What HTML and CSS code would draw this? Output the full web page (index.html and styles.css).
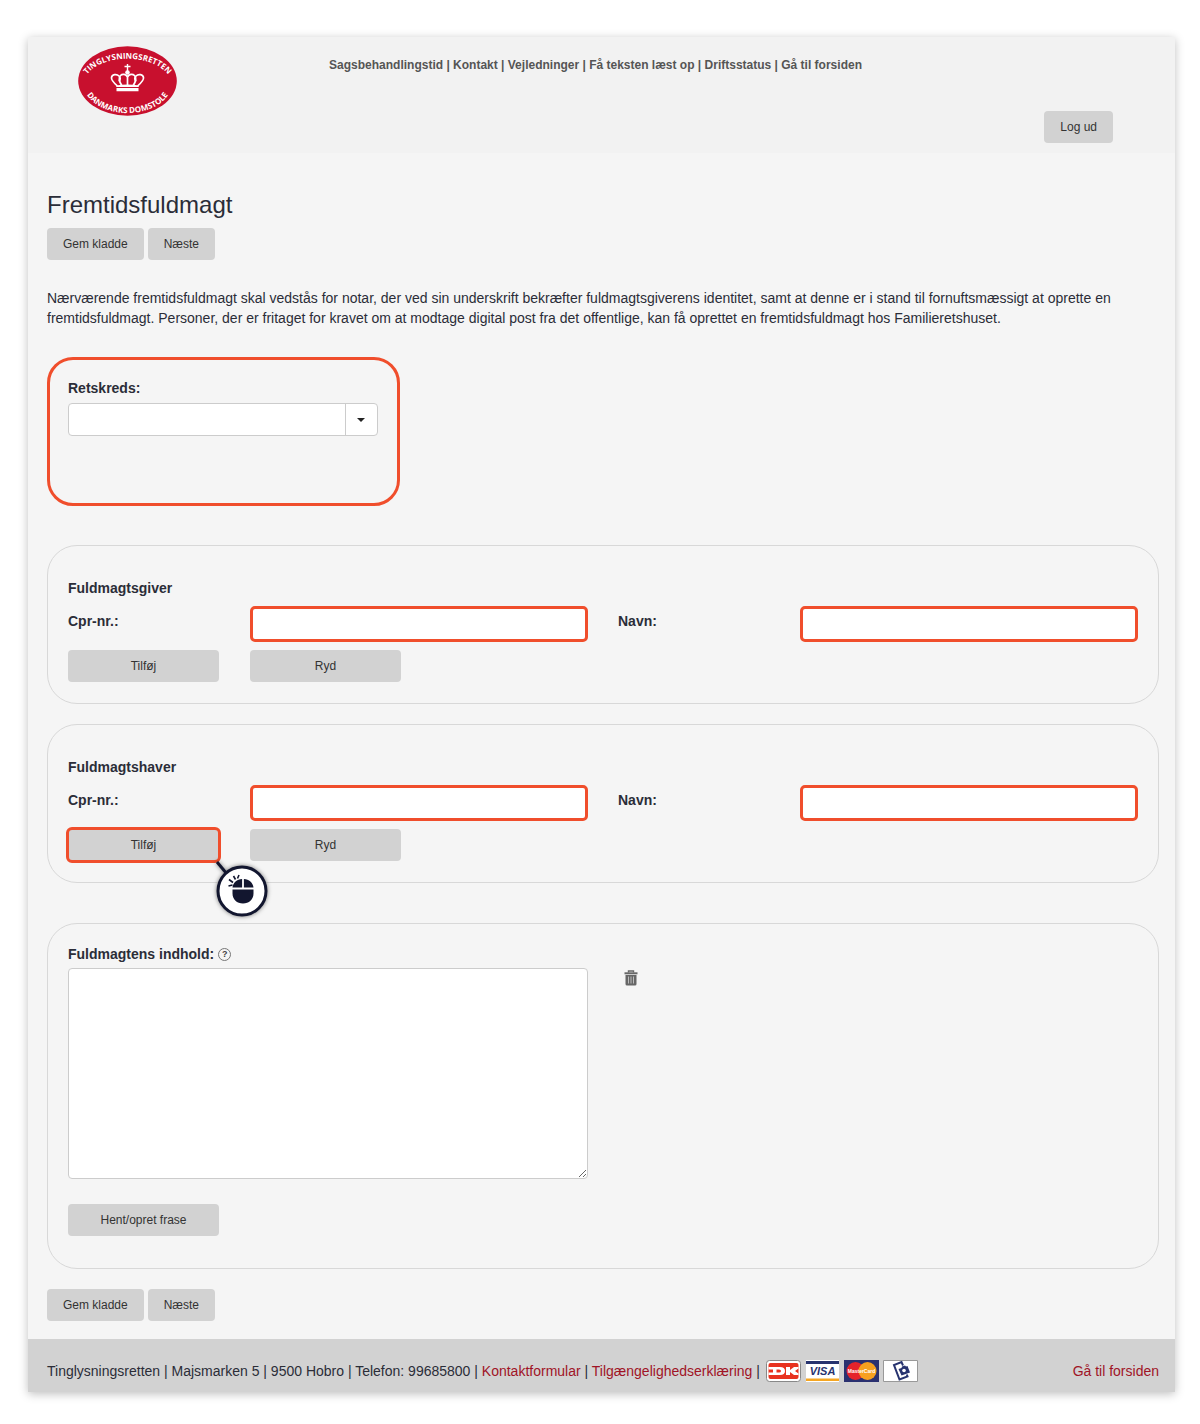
FILE: index.html
```
<!DOCTYPE html>
<html lang="da">
<head>
  <meta charset="UTF-8" />
  <meta name="viewport" content="width=device-width, initial-scale=1.0" />
  <title>Fremtidsfuldmagt</title>
  <link rel="stylesheet" href="styles.css">
</head>
<body>

<div class="page">
  <header class="header">
    <svg class="logo" viewBox="0 0 99 70" role="img" aria-label="Tinglysningsretten, Danmarks Domstole">
      <defs>
        <path id="arc-top" d="M7 32 A44 26 0 0 1 92 32" />
        <path id="arc-bottom" d="M6 42 A44 29.500 0 0 0 93 42" />
      </defs>
      <ellipse cx="49.500" cy="35" rx="49.300" ry="34.700" fill="#c8102e" />
      <text class="logo-text"><textPath href="#arc-top" startOffset="50%" text-anchor="middle">TINGLYSNINGSRETTEN</textPath></text>
      <text class="logo-text"><textPath href="#arc-bottom" startOffset="50%" text-anchor="middle">DANMARKS DOMSTOLE</textPath></text>
      <g fill="none" stroke="#fff" stroke-width="1.700">
        <path d="M49.500 18v7M46.500 20.500h6" stroke-width="1.400" />
        <path d="M39.500 40C36 37 33 34.500 33.500 31.500c.5-3 5-4 7.500-1.500 1.500 1.500 1.500 3.500 0 5.500" />
        <path d="M59.500 40c3.500-3 6.500-5.500 6-8.500-.5-3-5-4-7.500-1.500-1.500 1.500-1.500 3.500 0 5.500" />
        <path d="M44 40c-2.500-4-4-8-1.500-10.500 2-2 5.500-1.500 7 1.500 1.500-3 5-3.500 7-1.500 2.500 2.500 1 6.500-1.500 10.500M49.500 30v10" />
      </g>
      <circle cx="49.500" cy="26.500" r="2.300" fill="#fff" />
      <path d="M38 39.500q11.500-2 23 0l-.5 1.500h-22zM38.500 42h22v3.300h-22z" fill="#fff" />
    </svg>
    <nav class="topnav">
      <a href="#">Sagsbehandlingstid</a> | <a href="#">Kontakt</a> | <a href="#">Vejledninger</a> | <a href="#">Få teksten læst op</a> | <a href="#">Driftsstatus</a> | <a href="#">Gå til forsiden</a>
    </nav>
    <button class="btn logout" type="button">Log ud</button>
  </header>

  <main class="content">
    <h1>Fremtidsfuldmagt</h1>
    <div class="actions">
      <button class="btn" type="button">Gem kladde</button>
      <button class="btn" type="button">Næste</button>
    </div>

    <p class="intro">Nærværende fremtidsfuldmagt skal vedstås for notar, der ved sin underskrift bekræfter fuldmagtsgiverens identitet, samt at denne er i stand til fornuftsmæssigt at oprette en fremtidsfuldmagt. Personer, der er fritaget for kravet om at modtage digital post fra det offentlige, kan få oprettet en fremtidsfuldmagt hos Familieretshuset.</p>

    <section class="district">
      <label for="retskreds">Retskreds:</label>
      <div class="combo">
        <select id="retskreds"><option value=""></option></select>
      </div>
    </section>

    <section class="panel">
      <h2>Fuldmagtsgiver</h2>
      <div class="fields">
        <div class="field">
          <label for="giver-cpr">Cpr-nr.:</label>
          <input class="marked" type="text" id="giver-cpr">
        </div>
        <div class="field">
          <label for="giver-navn">Navn:</label>
          <input class="marked" type="text" id="giver-navn">
        </div>
        <div class="field">
          <button class="btn wide" type="button">Tilføj</button>
          <button class="btn wide" type="button">Ryd</button>
        </div>
      </div>
    </section>

    <section class="panel">
      <h2>Fuldmagtshaver</h2>
      <div class="fields">
        <div class="field">
          <label for="haver-cpr">Cpr-nr.:</label>
          <input class="marked" type="text" id="haver-cpr">
        </div>
        <div class="field">
          <label for="haver-navn">Navn:</label>
          <input class="marked" type="text" id="haver-navn">
        </div>
        <div class="field">
          <div class="click-target">
            <button class="btn wide" type="button">Tilføj</button>
            <svg class="click-hint" viewBox="0 0 58 62" aria-hidden="true">
              <path d="M4 4l10 12" stroke="#12162f" stroke-width="3" />
              <circle cx="29" cy="33" r="24" fill="#fff" stroke="#12162f" stroke-width="3" />
              <path d="M19.500 29.500C20 24.500 24 21.500 29.100 21v8.500zM30.900 21c5.100.5 9.100 3.500 9.600 8.500h-9.600zM19.500 31.500h21v4c0 6-4.500 10-10.500 10s-10.500-4-10.500-10z" fill="#12162f" />
              <path d="M15.500 28l4-1M16 21.500l4 3M20.500 18l2 3.500M26 17l-1.500 3.500" stroke="#12162f" stroke-width="1.600" />
            </svg>
          </div>
          <button class="btn wide" type="button">Ryd</button>
        </div>
      </div>
    </section>

    <section class="panel text-panel">
      <div class="text-label">
        <label for="indhold">Fuldmagtens indhold:</label>
        <button class="help" type="button" aria-label="Hjælp">?</button>
      </div>
      <div class="text-row">
        <textarea id="indhold"></textarea>
        <button class="trash" type="button" aria-label="Slet">
          <svg viewBox="0 0 14 16" aria-hidden="true">
            <path d="M4.500 2.500V1h5v1.500" fill="none" stroke="#666" stroke-width="1.400" />
            <path d="M.5 2.300h13v2H.5z" fill="#666" />
            <path d="M1.500 5h11v9q0 1.500-1.500 1.500H3Q1.500 15.500 1.500 14z" fill="#666" />
            <path d="M4.500 6.500v7M7 6.500v7M9.500 6.500v7" stroke="#bbb" />
          </svg>
        </button>
      </div>
      <button class="btn wide" type="button">Hent/opret frase</button>
    </section>

    <div class="actions">
      <button class="btn" type="button">Gem kladde</button>
      <button class="btn" type="button">Næste</button>
    </div>
  </main>

  <footer class="footer">
    <div class="contact">Tinglysningsretten | Majsmarken 5 | 9500 Hobro | Telefon: 99685800 | <a href="#">Kontaktformular</a> | <a href="#">Tilgængelighedserklæring</a> |</div>
    <div class="cards">
      <svg viewBox="0 0 35 22" role="img" aria-label="Dankort">
        <rect x=".5" y=".5" width="34" height="21" rx="3" fill="#fff" stroke="#888" />
        <rect x="2.500" y="3" width="30" height="16" rx="2" fill="#e8321f" />
        <path fill-rule="evenodd" d="M2.500 7H14q5 0 5 4t-5 4H2.500v-2.500H7v-3H2.500zM10.500 9.500v3h2.500q2 0 2-1.500t-2-1.500z" fill="#fff" />
        <path d="M20 7h4v3l4-3h4.500v1.500L29 11l3.500 2.500V15H28l-4-3v3h-4z" fill="#fff" />
      </svg>
      <svg viewBox="0 0 35 22" role="img" aria-label="Visa">
        <path d="M1 0h33v22H1z" fill="#fff" />
        <path d="M1 1h33v3H1z" fill="#27336f" />
        <path d="M1 18.500h33V21H1z" fill="#f5a623" />
        <text class="visa" x="17.500" y="15" text-anchor="middle">VISA</text>
      </svg>
      <svg viewBox="0 0 35 22" role="img" aria-label="MasterCard">
        <path d="M0 0h35v22H0z" fill="#2b3170" />
        <circle cx="11.500" cy="11" r="9" fill="#e5232b" />
        <circle cx="23.500" cy="11" r="9" fill="#f6a01f" />
        <text class="mastercard" x="17.500" y="13" text-anchor="middle">MasterCard</text>
      </svg>
      <svg viewBox="0 0 35 22" role="img" aria-label="MobilePay">
        <path d="M.5.5h34v21H.5z" fill="#fff" stroke="#999" />
        <path d="M20 5.500L18.500 2 11 5l5.500 14.500 8-3-.7-2" fill="none" stroke="#27336f" stroke-width="2" />
        <path d="M15.500 9l3-1 .5-1.500 3-1 1 1 1.500-.5 2.500 6.500-8.500 3z" fill="#27336f" />
        <circle cx="21" cy="10.500" r="1.800" fill="#fff" />
      </svg>
    </div>
    <a class="home" href="#">Gå til forsiden</a>
  </footer>
</div>

</body>
</html>
```
FILE: styles.css
```
* {
  box-sizing: border-box;
}
body {
  margin: 0;
  padding: 37px 25px 32px 28px;
  background: #fff;
  color: #2b2d38;
  font-family: "Liberation Sans", Arial, sans-serif;
  font-size: 14px;
  line-height: 20px;
}
.page {
  background: #f5f5f5;
  box-shadow: 0 2px 9px rgba(0,0,0,0.25);
}
.header {
  display: grid;
  grid-template-columns: 1fr auto 1fr;
  min-height: 116px;
  padding: 9px 62px 10px 50px;
  background: #f2f2f2;
}
.logo {
  width: 99px;
  height: 70px;
}
.logo-text {
  fill: #fff;
  font-family: "Open Sans", sans-serif;
  font-size: 8px;
  font-weight: bold;
}
.topnav {
  padding-top: 9px;
  color: #555;
  font-size: 12px;
  font-weight: bold;
}
.topnav a {
  color: inherit;
  text-decoration: none;
}
.content {
  padding: 40px 16px 18px 19px;
}
h1 {
  margin: 0 0 11px;
  font-size: 24px;
  line-height: 24px;
  font-weight: normal;
}
h2 {
  margin: 0 0 8px;
  font-size: 14px;
  line-height: 20px;
}
label {
  font-weight: bold;
}
.actions {
  display: flex;
  gap: 4px;
}
.btn {
  height: 32px;
  padding: 0 16px;
  border: 0;
  border-radius: 4px;
  background: #d2d2d2;
  color: #333;
  font-family: inherit;
  font-size: 12px;
}
.logout {
  justify-self: end;
  align-self: end;
}
.intro {
  margin: 28px 0 29px;
}
.district {
  width: 353px;
  height: 149px;
  margin-bottom: 39px;
  padding: 18px;
  border: 3px solid #f04e2c;
  border-radius: 26px;
}
.district label {
  display: block;
  margin-bottom: 5px;
}
.combo {
  position: relative;
  width: 310px;
}
.combo select {
  display: block;
  width: 100%;
  height: 33px;
  border: 1px solid #ccc;
  border-radius: 4px;
  background: #fff;
  appearance: none;
}
.combo::before {
  content: "";
  position: absolute;
  top: 1px;
  bottom: 1px;
  right: 32px;
  border-left: 1px solid #ccc;
  pointer-events: none;
}
.combo::after {
  content: "";
  position: absolute;
  top: 15px;
  right: 13px;
  border: 4px solid transparent;
  border-top-color: #222;
  border-bottom: 0;
  pointer-events: none;
}
.panel {
  margin-bottom: 20px;
  padding: 32px 20px 21px;
  border: 1px solid #d8d8d8;
  border-radius: 30px;
}
.fields {
  display: grid;
  grid-template-columns: 1fr 1fr;
  gap: 8px 30px;
}
.field {
  display: grid;
  grid-template-columns: 35% 65%;
}
.field label {
  padding-top: 5px;
}
.marked {
  width: 100%;
  height: 36px;
  padding: 0 10px;
  border: 3px solid #f04e2c;
  border-radius: 5px;
  background: #fff;
}
.wide {
  width: 151px;
  padding: 0;
}
.click-target {
  position: relative;
  width: 151px;
}
.click-target .btn {
  display: block;
  outline: 3px solid #f04e2c;
  outline-offset: -1px;
}
.click-hint {
  position: absolute;
  left: 145px;
  top: 29px;
  width: 58px;
  height: 62px;
  filter: drop-shadow(0 0 2px rgba(0,0,0,0.5));
}
.text-panel {
  margin-top: 40px;
  padding: 20px 20px 32px;
}
.text-label {
  display: flex;
  align-items: center;
  gap: 4px;
  margin-bottom: 4px;
}
.help {
  width: 13px;
  height: 13px;
  padding: 0;
  border: 1px solid #777;
  border-radius: 50%;
  background: none;
  color: #444;
  font: bold 9px/11px "Liberation Sans", Arial, sans-serif;
}
.text-row {
  display: grid;
  grid-template-columns: 1fr 1fr;
  gap: 30px;
  margin-bottom: 25px;
}
textarea {
  height: 211px;
  padding: 8px;
  border: 1px solid #ccc;
  border-radius: 4px;
  background: #fff;
}
.trash {
  align-self: start;
  width: 26px;
  height: 20px;
  padding: 2px 6px;
  border: 0;
  background: none;
}
.trash svg {
  display: block;
  width: 14px;
  height: 16px;
}
.footer {
  display: flex;
  align-items: center;
  min-height: 53px;
  padding: 10px 16px 0 19px;
  background: #d2d2d2;
}
.footer a {
  color: #a01426;
  text-decoration: none;
}
.cards {
  display: flex;
  gap: 4px;
  margin-left: 6px;
}
.cards svg {
  width: 35px;
  height: 22px;
}
.visa {
  fill: #27336f;
  font-size: 11px;
  font-weight: bold;
  font-style: italic;
}
.mastercard {
  fill: #fff;
  font-size: 5px;
  font-weight: bold;
}
.home {
  margin-left: auto;
}
```
